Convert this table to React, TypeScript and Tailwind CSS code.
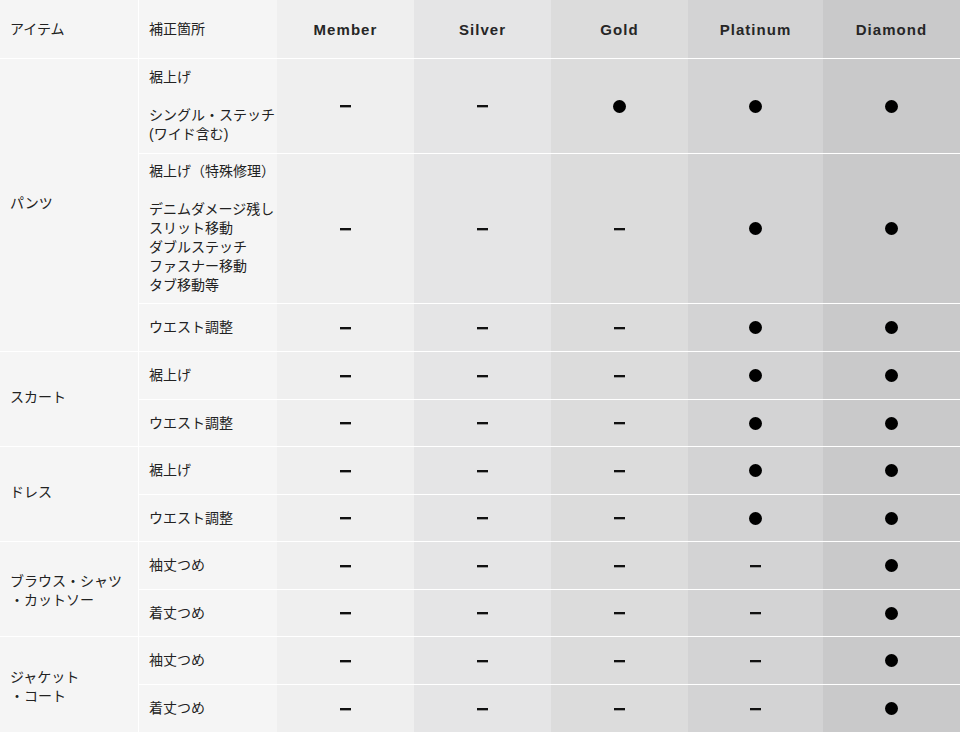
const FONT = '"Liberation Sans", "Noto Sans CJK JP", sans-serif';

const TIERS = ['Member', 'Silver', 'Gold', 'Platinum', 'Diamond'];
const TIER_BG = ['bg-[#efefef]', 'bg-[#e5e5e6]', 'bg-[#dcdcdc]', 'bg-[#d3d3d4]', 'bg-[#c9c9ca]'];

type Row = { label: string[]; h: string; v: number[] };
type Group = { item: string[]; rows: Row[] };

// heights include the 1px white top line of every row after the first
const GROUPS: Group[] = [
  {
    item: ['パンツ'],
    rows: [
      { label: ['裾上げ', '', 'シングル・ステッチ', '(ワイド含む)'], h: 'h-[94px]', v: [0, 0, 1, 1, 1] },
      {
        label: ['裾上げ（特殊修理）', '', 'デニムダメージ残し', 'スリット移動', 'ダブルステッチ', 'ファスナー移動', 'タブ移動等'],
        h: 'h-[150px]',
        v: [0, 0, 0, 1, 1],
      },
      { label: ['ウエスト調整'], h: 'h-[48px]', v: [0, 0, 0, 1, 1] },
    ],
  },
  {
    item: ['スカート'],
    rows: [
      { label: ['裾上げ'], h: 'h-[47px]', v: [0, 0, 0, 1, 1] },
      { label: ['ウエスト調整'], h: 'h-[47px]', v: [0, 0, 0, 1, 1] },
    ],
  },
  {
    item: ['ドレス'],
    rows: [
      { label: ['裾上げ'], h: 'h-[47px]', v: [0, 0, 0, 1, 1] },
      { label: ['ウエスト調整'], h: 'h-[47px]', v: [0, 0, 0, 1, 1] },
    ],
  },
  {
    item: ['ブラウス・シャツ', '・カットソー'],
    rows: [
      { label: ['袖丈つめ'], h: 'h-[47px]', v: [0, 0, 0, 0, 1] },
      { label: ['着丈つめ'], h: 'h-[47px]', v: [0, 0, 0, 0, 1] },
    ],
  },
  {
    item: ['ジャケット', '・コート'],
    rows: [
      { label: ['袖丈つめ'], h: 'h-[47px]', v: [0, 0, 0, 0, 1] },
      { label: ['着丈つめ'], h: 'h-[48px]', v: [0, 0, 0, 0, 1] },
    ],
  },
];

function Mark({ on }: { on: number }) {
  if (on) return <span className="block w-[13px] h-[13px] rounded-full bg-black" />;
  return <span className="block w-[11px] h-[2px] bg-[#111] shadow-[0_1px_0_#9a9a9a]" />;
}

export default function App() {
  return (
    <div className="w-[960px] h-[732px] overflow-hidden bg-white text-[14px] leading-[19px] text-[#222]" style={{ fontFamily: FONT }}>
      {/* header */}
      <div className="grid grid-cols-[139px_138px_137px_137px_137px_135px_1fr] h-[58px]">
        <div className="flex items-center pl-2.5 bg-[#f5f5f5] border-r border-white">アイテム</div>
        <div className="flex items-center pl-2.5 bg-[#f5f5f5]">補正箇所</div>
        {TIERS.map((t, i) => (
          <div key={t} className={`flex items-center justify-center text-[15px] font-bold tracking-[0.07em] text-[#262626] ${TIER_BG[i]}`}>
            {t}
          </div>
        ))}
      </div>

      {GROUPS.map((g) => (
        <div key={g.item.join('')} className="grid grid-cols-[139px_1fr] border-t border-white">
          <div className={`flex items-center pl-2.5 bg-[#f5f5f5] border-r border-white ${g.item.length > 1 ? 'pt-1' : 'pb-1'}`}>
            <div>
              {g.item.map((l) => (
                <div key={l}>{l}</div>
              ))}
            </div>
          </div>
          <div className="flex flex-col">
            {g.rows.map((r, ri) => (
              <div
                key={ri}
                className={`grid grid-cols-[138px_137px_137px_137px_135px_1fr] ${r.h} ${ri > 0 ? 'border-t border-white' : ''}`}
              >
                <div className="flex items-center pl-2.5 bg-[#f5f5f5]">
                  <div>
                    {r.label.map((l, li) => (
                      <div key={li} className="h-[19px] whitespace-nowrap">{l}</div>
                    ))}
                  </div>
                </div>
                {r.v.map((on, i) => (
                  <div key={i} className={`flex items-center justify-center ${TIER_BG[i]}`}>
                    <Mark on={on} />
                  </div>
                ))}
              </div>
            ))}
          </div>
        </div>
      ))}
    </div>
  );
}
